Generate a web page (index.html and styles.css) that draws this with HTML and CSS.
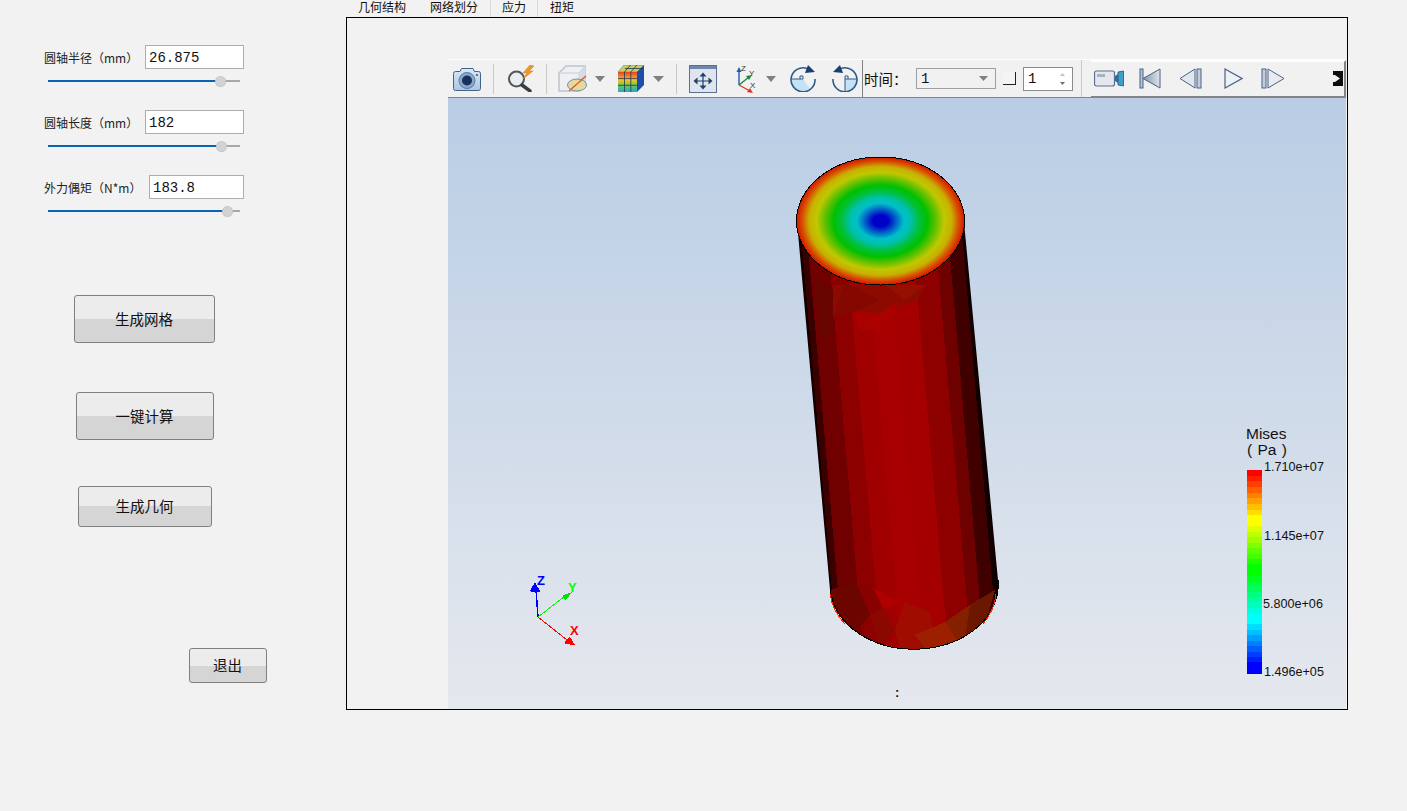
FILE: index.html
```html
<!DOCTYPE html>
<html lang="zh">
<head>
<meta charset="utf-8">
<title>圆轴扭转</title>
<link rel="stylesheet" href="styles.css">
</head>
<body>
<div class="app">
  <aside class="side">
    <div class="field"><span class="field-label">圆轴半径（mm）</span><div class="num">26.875</div></div>
    <div class="slider"><div class="slider-fill" style="width:172px"></div><div class="slider-knob" style="left:172px"></div></div>
    <div class="field field-next"><span class="field-label">圆轴长度（mm）</span><div class="num">182</div></div>
    <div class="slider"><div class="slider-fill" style="width:173px"></div><div class="slider-knob" style="left:173px"></div></div>
    <div class="field field-next"><span class="field-label">外力偶矩（N*m）</span><div class="num num-short">183.8</div></div>
    <div class="slider"><div class="slider-fill" style="width:179px"></div><div class="slider-knob" style="left:179px"></div></div>
    <button class="btn btn-mesh">生成网格</button>
    <button class="btn btn-solve">一键计算</button>
    <button class="btn btn-geo">生成几何</button>
    <button class="btn btn-exit">退出</button>
  </aside>
  <main class="main">
    <nav class="tabs">
      <span class="tab">几何结构</span>
      <span class="tab">网络划分</span>
      <span class="tab tab-active">应力</span>
      <span class="tab">扭矩</span>
    </nav>
    <section class="pane">
      <div class="viewer">
        <div class="toolbar">
          <svg class="icon w28 m5" viewBox="0 0 28 24"><defs><linearGradient id="camBody" x1="0" y1="0" x2="0" y2="1"><stop offset="0" stop-color="#dbe8f5"/><stop offset="1" stop-color="#a9c6e3"/></linearGradient></defs><path d="M7 4.500 8.500 1.500H20L21.500 4.500H25.500Q27.500 4.500 27.500 6.500V21.500Q27.500 23.500 25.500 23.500H2.500Q.5 23.500 .5 21.500V6.500Q.5 4.500 2.500 4.500Z" fill="url(#camBody)" stroke="#42648c"/><circle cx="14" cy="13.500" r="8" fill="#8ba8c8" stroke="#5b7da3"/><circle cx="14" cy="13.500" r="5" fill="#17315f"/><circle cx="24" cy="8" r="1" fill="#2d4f7d"/></svg>
          <i class="sep m12"></i>
          <svg class="icon w29 m12" viewBox="0 0 29 27"><circle cx="10.500" cy="14" r="7.500" fill="#e9edf0" stroke="#50565c" stroke-width="2"/><path d="M16 20 24 26" stroke="#3b3f44" stroke-width="3.500" stroke-linecap="round"/><path d="M24 0 17 8H21L17 14 27 6H23L28 1Z" fill="#eb9a2a" stroke="#d07a10" stroke-width=".5"/></svg>
          <i class="sep m11"></i>
          <svg class="icon w30 m11" viewBox="0 0 30 27"><path d="M1 8 8 1H27V19L21 26H1Z" fill="#eef0f3" stroke="#bcc4d0" stroke-width="1.500"/><path d="M1 8H21V26M21 8 27 1" fill="none" stroke="#c6ccd6"/><path d="M21 8 27 1V19L21 26Z" fill="#d6dbe4"/><ellipse cx="19" cy="20" rx="9.500" ry="6" fill="#e6d99a" stroke="#6f8fb0"/><path d="M11 26 28 11" stroke="#d9572a" stroke-width="1.200"/></svg>
          <svg class="icon w10 m7" viewBox="0 0 10 6"><path d="M0 0H10L5 6Z" fill="#808080"/></svg>
          <svg class="icon w27 m13" viewBox="0 0 27 27"><defs><linearGradient id="heat" x1="0" y1="0" x2="0" y2="1"><stop offset="0" stop-color="#e8402a"/><stop offset=".4" stop-color="#f2c22e"/><stop offset=".7" stop-color="#5fc95a"/><stop offset="1" stop-color="#2f9fe0"/></linearGradient></defs><path d="M0 7 6 0H26L19 7Z" fill="#c7cf62" stroke="#6f7f5a" stroke-width=".6"/><path d="M19 7 26 0V20L19 27Z" fill="#1d4fa8"/><rect x="0" y="7" width="19" height="20" fill="url(#heat)"/><path d="M6.500 7V27M12.800 7V27M0 13.600H19M0 20.300H19M7 3.500H25M6.500 7 12.500 0M12.800 7 19 0" stroke="#23364f" stroke-width=".8"/></svg>
          <svg class="icon w11 m8" viewBox="0 0 11 6"><path d="M0 0H11L5.500 6Z" fill="#808080"/></svg>
          <i class="sep m12"></i>
          <svg class="icon w28 m12" viewBox="0 0 28 28"><rect x=".5" y=".5" width="27" height="27" fill="#dfe5ee" stroke="#5b6f92"/><rect x="1" y="1" width="26" height="3" fill="#6f86ad"/><path d="M14 7.500 10.500 11.500H17.500ZM14 24.500 10.500 20.500H17.500ZM4.500 16 8.500 12.500V19.500ZM23.500 16 19.500 12.500V19.500Z" fill="#1f3f68"/><path d="M14 11V21M8 16H20" stroke="#1f3f68" stroke-width="1.200"/></svg>
          <svg class="icon w23 m17" viewBox="0 0 23 29"><path d="M5 21V6" stroke="#2457b0" stroke-width="1.400"/><path d="M5 3 2.500 8H7.500Z" fill="#2457b0"/><path d="M5 21 15 13" stroke="#1d8a3a" stroke-width="1.400"/><path d="M18 11 12 12 15 16Z" fill="#1d8a3a"/><path d="M5 21 16 27" stroke="#e0342a" stroke-width="1.400"/><path d="M19 29 13 28 16 24Z" fill="#e0342a"/><text class="axis-mini" x="7" y="7">Z</text><text class="axis-mini" x="15" y="12">Y</text><text class="axis-mini" x="16" y="24">X</text></svg>
          <svg class="icon w10 m9" viewBox="0 0 10 6"><path d="M0 0H10L5 6Z" fill="#808080"/></svg>
          <svg class="icon w26 m14" viewBox="0 0 26 27"><path d="M13 14H1A12 12 0 0 0 13 26 12 12 0 0 0 20 24Z" fill="#c4e2f6"/><path d="M13 14H1M13 14V11H10V14" fill="none" stroke="#2f5a8a"/><path d="M17 3.500A12 12 0 1 0 25 14" fill="none" stroke="#2f5a8a" stroke-width="1.600"/><path d="M25 7 15 8 18 0Z" fill="#1a3f70"/></svg>
          <svg class="icon w27 m15" viewBox="0 0 27 27"><path d="M14 14H26A12 12 0 0 1 14 26Z" fill="#c4e2f6"/><path d="M14 14H26M14 14V26M14 14V11H17V14" fill="none" stroke="#2f5a8a"/><path d="M10 3.500A12 12 0 1 1 2 14" fill="none" stroke="#2f5a8a" stroke-width="1.600"/><path d="M2 7 12 8 9 0Z" fill="#1a3f70"/></svg>
          <i class="sep-dark m4"></i>
          <span class="time-label">时间：</span>
          <div class="combo"><span>1</span><svg class="combo-arrow" viewBox="0 0 9 5"><path d="M0 0H9L4.500 5Z" fill="#808080"/></svg></div>
          <div class="corner"></div>
          <div class="spin"><span>1</span><svg class="spin-arrows" viewBox="0 0 7 12"><path d="M3.500 0 6 3H1Z" fill="#c0c0c0"/><path d="M3.500 12 6 9H1Z" fill="#707070"/></svg></div>
          <i class="sep sep-media"></i>
          <div class="media">
            <svg class="icon w30 m4b" viewBox="0 0 30 17"><rect x=".5" y="1" width="20" height="15" rx="2" fill="#e4e8ee" stroke="#5d6f88" stroke-width="1.200"/><rect x="3" y="4" width="8" height="3" fill="#a9b3c0"/><path d="M21 6 24 4V13L21 11Z" fill="#2f6f9f"/><path d="M24 2 29.500 1V16L24 15Z" fill="#3f9fc9" stroke="#26547f" stroke-width=".8"/></svg>
            <svg class="icon w22 m15" viewBox="0 0 22 21"><defs><linearGradient id="mediaFill" x1="0" y1="0" x2="1" y2="0"><stop offset="0" stop-color="#8494aa"/><stop offset="1" stop-color="#dfe4ea"/></linearGradient></defs><rect x="1" y="1" width="3" height="19" fill="#b6c2d2" stroke="#4a6285"/><path d="M4 10.500 21 1V20Z" fill="url(#mediaFill)" stroke="#4a6285"/></svg>
            <svg class="icon w23 m18" viewBox="0 0 23 21"><path d="M1 10.500 16 1V20Z" fill="#e2e7ee" stroke="#4a6285"/><rect x="18" y="1" width="4" height="19" fill="#c3cedc" stroke="#4a6285"/></svg>
            <svg class="icon w19 m22" viewBox="0 0 19 21"><path d="M1 1 18 10.500 1 20Z" fill="#eef1f5" stroke="#4a6285" stroke-width="1.200"/></svg>
            <svg class="icon w24 m18" viewBox="0 0 24 21"><rect x="1" y="1" width="4" height="19" fill="#c3cedc" stroke="#4a6285"/><path d="M7 1 23 10.500 7 20Z" fill="#e8ecf1" stroke="#4a6285"/></svg>
            <svg class="icon w12 end-icon" viewBox="0 0 12 17"><defs><filter id="soft" x="-20%" y="-20%" width="140%" height="140%"><feGaussianBlur stdDeviation=".6"/></filter></defs><g filter="url(#soft)"><path d="M1 1H11V16H1Z" fill="#0c0c0c"/><path d="M0 5H3L8 8.500 3 12H0Z" fill="#f0f0f0"/></g></svg>
          </div>
        </div>
        <svg class="scene" viewBox="448 98 898 611" shape-rendering="crispEdges">
          <defs>
            <linearGradient id="sky" x1="0" y1="0" x2="0" y2="1">
              <stop offset="0" stop-color="#b9cde5"/>
              <stop offset="1" stop-color="#e5e8ee"/>
            </linearGradient>
            <radialGradient id="stress">
              <stop offset="0" stop-color="#0000c8"/>
              <stop offset=".09" stop-color="#0000c8"/>
              <stop offset=".2" stop-color="#0070c8"/>
              <stop offset=".28" stop-color="#00c0c8"/>
              <stop offset=".36" stop-color="#00c0b0"/>
              <stop offset=".46" stop-color="#00c040"/>
              <stop offset=".56" stop-color="#00c000"/>
              <stop offset=".66" stop-color="#60c000"/>
              <stop offset=".76" stop-color="#c0c800"/>
              <stop offset=".85" stop-color="#c8b000"/>
              <stop offset=".93" stop-color="#d85000"/>
              <stop offset="1" stop-color="#d01800"/>
            </radialGradient>
            <linearGradient id="scale" x1="0" y1="0" x2="0" y2="1">
              <stop offset="0" stop-color="#ff0000"/>
              <stop offset=".25" stop-color="#ffff00"/>
              <stop offset=".49" stop-color="#00ff00"/>
              <stop offset=".73" stop-color="#00ffff"/>
              <stop offset=".97" stop-color="#0000ff"/>
              <stop offset="1" stop-color="#0000ff"/>
            </linearGradient>
            <filter id="bands" color-interpolation-filters="sRGB" x="0" y="0" width="1" height="1">
              <feComponentTransfer>
                <feFuncR type="discrete" tableValues="0 .125 .25 .375 .5 .625 .75 .875 1"/>
                <feFuncG type="discrete" tableValues="0 .125 .25 .375 .5 .625 .75 .875 1"/>
                <feFuncB type="discrete" tableValues="0 .125 .25 .375 .5 .625 .75 .875 1"/>
              </feComponentTransfer>
            </filter>
            <clipPath id="body">
              <path d="M797 222 830 590A84 64 0 0 0 998 580L964 222Z"/>
            </clipPath>
          </defs>
          <rect x="448" y="98" width="898" height="611" fill="url(#sky)"/>

          <g clip-path="url(#body)">
            <polygon points="790,210 799,210 838,660 829,660" fill="#140000"/>
            <polygon points="799,210 805,210 844,660 838,660" fill="#3a0000"/>
            <polygon points="805,210 825,210 864,660 844,660" fill="#700000"/>
            <polygon points="825,210 843,210 882,660 864,660" fill="#8c0000"/>
            <polygon points="843,210 863,210 902,660 882,660" fill="#a00000"/>
            <polygon points="863,210 886,210 925,660 902,660" fill="#a80000"/>
            <polygon points="886,210 910,210 949,660 925,660" fill="#a40000"/>
            <polygon points="910,210 933,210 972,660 949,660" fill="#8e0000"/>
            <polygon points="933,210 946,210 985,660 972,660" fill="#6e0000"/>
            <polygon points="946,210 960,210 999,660 985,660" fill="#400000"/>
            <polygon points="960,210 975,210 1014,660 999,660" fill="#100000"/>

            <polygon points="815,280 833,290 833,335 820,340" fill="#680400"/>
            <polygon points="833,285 925,285 918,300 880,313 855,312 833,317" fill="#8c0a00"/>
            <polygon points="845,282 880,300 855,312 833,317" fill="#840800"/>
            <polygon points="855,312 880,313 900,300 882,330 860,330" fill="#aa0000"/>
            <polygon points="885,285 925,285 905,300" fill="#941000"/>

            <polygon points="830,590 856,582 870,615 848,640" fill="#6c0400"/>
            <polygon points="856,582 873,588 883,608 870,615" fill="#880000"/>
            <polygon points="873,588 902,603 883,608" fill="#ae0000"/>
            <polygon points="870,615 883,608 895,630 880,650" fill="#8a0800"/>
            <polygon points="895,630 905,602 930,612 935,650 900,650" fill="#a00c00"/>
            <polygon points="915,635 945,622 965,640 930,655" fill="#9c2000"/>
            <polygon points="945,622 970,605 982,615 960,645" fill="#842000"/>
            <polygon points="970,605 995,590 985,625 965,640" fill="#6c1800"/>
          </g>
          <path d="M830 590A84 64 0 0 0 998 580" fill="none" stroke="#000"/>
          <path d="M830 594A84 64 0 0 0 845 624M983 624A84 64 0 0 0 996 594" fill="none" stroke="#ff2000"/>
          <ellipse cx="880.500" cy="221" rx="84" ry="64" fill="url(#stress)" stroke="#000"/>

          <path d="M538 617 536 590" stroke="#0000ff" stroke-width="1.500"/>
          <path d="M535 582 540 591 539 592H531L530 591Z" fill="#0000ff"/>
          <path d="M538 617 565 596" stroke="#00ff00"/>
          <path d="M572 592 566 600 563 598V595Z" fill="#00e000"/>
          <path d="M538 617 567 640" stroke="#ff0000"/>
          <path d="M570 637 575 645 565 644V641Z" fill="#ff0000"/>
          <text class="axis-z" x="537" y="585">Z</text>
          <text class="axis-y" x="568" y="592">Y</text>
          <text class="axis-x" x="570" y="635">X</text>

          <rect x="1247" y="470" width="15" height="204" fill="url(#scale)" filter="url(#bands)"/>
          <text class="bar-title" x="1246" y="439">Mises</text>
          <text class="bar-title bar-unit" x="1247" y="455">( Pa )</text>
          <text class="bar-tick" x="1264" y="470.500">1.710e+07</text>
          <text class="bar-tick" x="1264" y="540">1.145e+07</text>
          <text class="bar-tick" x="1263" y="608">5.800e+06</text>
          <text class="bar-tick" x="1264" y="676">1.496e+05</text>
          <text class="colon" x="895" y="697">:</text>
        </svg>
      </div>
    </section>
  </main>
</div>
</body>
</html>
```
FILE: styles.css
```css
* {
  box-sizing: border-box;
}

html,
body {
  margin: 0;
  height: 811px;
  overflow: hidden;
  background: #f2f2f2;
}

body {
  font-family: "Noto Sans CJK SC", "Liberation Sans", sans-serif;
  color: #111;
}

.app {
  display: flex;
  height: 811px;
}

/* Left control column */
.side {
  width: 346px;
  flex: none;
  display: flex;
  flex-direction: column;
  align-items: flex-start;
  padding-top: 45px;
}

.field {
  width: 244px;
  height: 24px;
  padding-left: 44px;
  display: flex;
  align-items: center;
  justify-content: space-between;
}

.field-next {
  margin-top: 28px;
}

.field-label {
  font-size: 12px;
  white-space: nowrap;
  color: #222;
}

.num {
  width: 99px;
  height: 24px;
  line-height: 25px;
  padding-left: 3px;
  background: #fff;
  border: 1px solid #adadad;
  font-family: "Liberation Mono", monospace;
  font-size: 14px;
  color: #111;
}

.num-short {
  width: 95px;
}

.slider {
  position: relative;
  width: 192px;
  height: 2px;
  margin: 11px 0 0 48px;
  background: #a8a8a8;
}

.slider-fill {
  height: 2px;
  background: #0a64b4;
}

.slider-knob {
  position: absolute;
  top: -4.500px;
  width: 11px;
  height: 11px;
  margin-left: -5.500px;
  border-radius: 50%;
  background: #d2d2d2;
  border: 1px dotted #bcbcbc;
}

.btn {
  display: block;
  padding: 0 1px 2px 0;
  border: 1px solid #808080;
  border-radius: 3px;
  background: linear-gradient(#ececec 0, #ececec 50%, #d5d5d5 50%, #d5d5d5 100%);
  font-family: inherit;
  font-size: 14.500px;
  color: #111;
}

.btn-mesh {
  width: 141px;
  height: 48px;
  margin: 83px 0 0 74px;
}

.btn-solve {
  width: 138px;
  height: 48px;
  margin: 49px 0 0 76px;
}

.btn-geo {
  width: 134px;
  height: 41px;
  margin: 46px 0 0 78px;
}

.btn-exit {
  width: 78px;
  height: 35px;
  margin: 121px 0 0 189px;
}

/* Right tab area */
.main {
  width: 1002px;
  flex: none;
}

.tabs {
  height: 17px;
  display: flex;
  font-size: 12px;
  line-height: 13px;
}

.tab {
  padding: 0 12px;
  white-space: nowrap;
  color: #111;
}

.tab-active {
  background: #f2f2f2;
  border: 1px solid #d9d9d9;
  border-top: none;
  border-bottom: none;
  padding: 0 11px;
}

.pane {
  height: 693px;
  border: 1px solid #000;
  padding: 41px 0 0 101px;
}

.viewer {
  width: 898px;
  height: 650px;
  display: flex;
  flex-direction: column;
}

.toolbar {
  height: 39px;
  flex: none;
  display: flex;
  align-items: center;
  background: #f1f1f1;
  border-top: 1px solid #fff;
  border-bottom: 1px solid #848484;
}

.icon {
  flex: none;
  display: block;
}

.w10 { width: 10px; }
.w11 { width: 11px; }
.w12 { width: 12px; }
.w19 { width: 19px; }
.w22 { width: 22px; }
.w23 { width: 23px; }
.w24 { width: 24px; }
.w26 { width: 26px; }
.w27 { width: 27px; }
.w28 { width: 28px; }
.w29 { width: 29px; }
.w30 { width: 30px; }

.m4 { margin-left: 4px; }
.m4b { margin-left: 3px; }
.m5 { margin-left: 5px; }
.m7 { margin-left: 7px; }
.m8 { margin-left: 8px; }
.m9 { margin-left: 9px; }
.m11 { margin-left: 11px; }
.m12 { margin-left: 12px; }
.m13 { margin-left: 13px; }
.m14 { margin-left: 14px; }
.m15 { margin-left: 15px; }
.m17 { margin-left: 17px; }
.m18 { margin-left: 18px; }
.m22 { margin-left: 22px; }

.sep {
  flex: none;
  width: 1px;
  height: 30px;
  background: #c8c8c8;
}

.sep-dark {
  flex: none;
  width: 1px;
  height: 37px;
  background: #808080;
}

.sep-media {
  margin-left: 8px;
  height: 37px;
}

.time-label {
  margin-left: 1px;
  width: 52px;
  flex: none;
  font-size: 14.500px;
  white-space: nowrap;
}

.combo {
  flex: none;
  width: 80px;
  height: 21px;
  padding: 0 4px;
  display: flex;
  align-items: center;
  justify-content: space-between;
  border: 1px solid #a0a0a0;
  font-family: "Liberation Mono", monospace;
  font-size: 14px;
}

.combo-arrow {
  width: 9px;
  height: 5px;
  margin-right: 3px;
}

.corner {
  flex: none;
  width: 13px;
  height: 13px;
  margin-left: 7px;
  border-right: 1px solid #222;
  border-bottom: 1px solid #222;
  background: #f4f4f4;
}

.spin {
  flex: none;
  width: 50px;
  height: 24px;
  margin-left: 7px;
  padding: 0 6px 0 4px;
  display: flex;
  align-items: center;
  justify-content: space-between;
  background: #fff;
  border: 1px solid #8a8a8a;
  font-family: "Liberation Mono", monospace;
  font-size: 14px;
}

.spin-arrows {
  width: 7px;
  height: 12px;
}

.media {
  flex: none;
  width: 255px;
  height: 38px;
  margin-left: 9px;
  display: flex;
  align-items: center;
  border-top: 2px solid #fff;
  border-bottom: 2px solid #848484;
  border-right: 2px solid #848484;
}

.end-icon {
  margin-left: 47px;
}

/* 3D view */
.scene {
  display: block;
  width: 898px;
  height: 611px;
  flex: none;
}

.scene text,
.icon text {
  font-family: "Liberation Sans", sans-serif;
}

.axis-mini {
  font-size: 8px;
  fill: #333;
}

.axis-z,
.axis-y,
.axis-x {
  font-size: 13px;
  font-weight: 700;
}

.axis-z { fill: #0000ff; }
.axis-y { fill: #00ff00; }
.axis-x { fill: #ff0000; }

.bar-title {
  font-size: 15.500px;
  fill: #111;
}

.bar-unit {
  word-spacing: 1px;
}

.bar-tick {
  font-size: 12.600px;
  fill: #111;
}

.colon {
  font-size: 13px;
  font-weight: 700;
  fill: #111;
}
```
